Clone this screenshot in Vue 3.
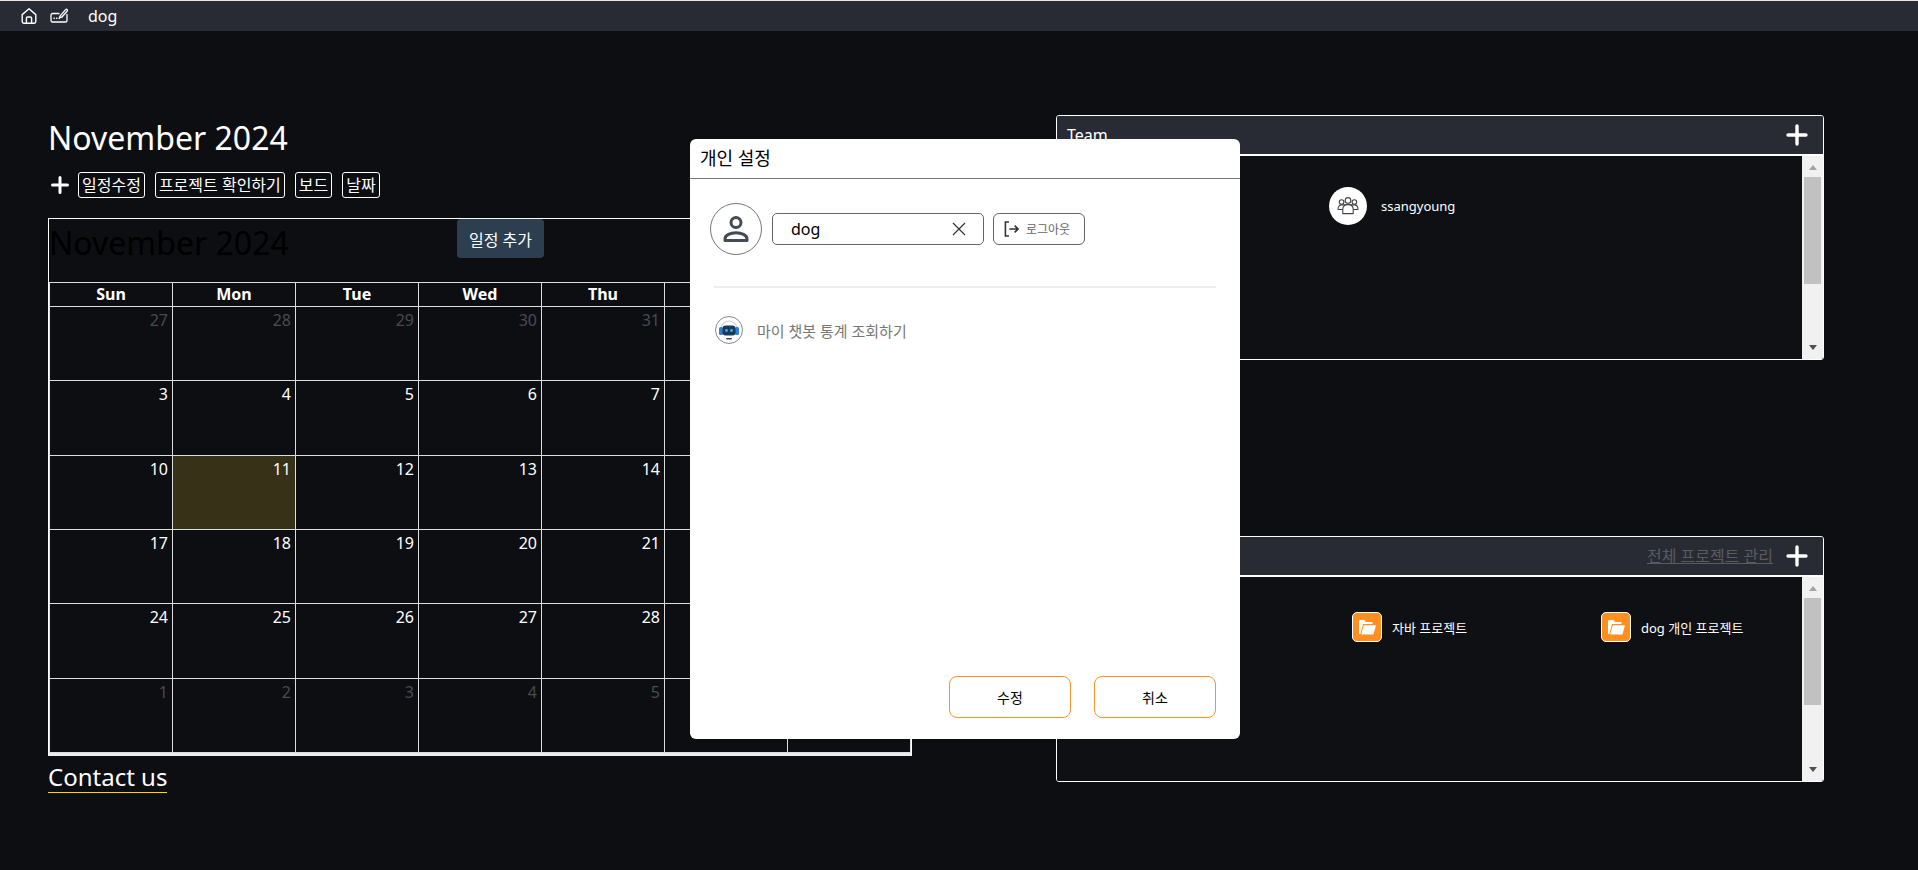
<template>
  <div class="page">
    <!-- top bar -->
    <nav class="topbar">
      <svg class="nav-icon" width="18" height="18" viewBox="0 0 18 18" fill="none" stroke="#fff" stroke-width="1.4" stroke-linejoin="round">
        <path d="M2.2 7.6 9 1.8l6.8 5.8v7a1.6 1.6 0 0 1-1.6 1.6H3.8a1.6 1.6 0 0 1-1.6-1.6z" />
        <path d="M6.4 16.2v-5a1.2 1.2 0 0 1 1.2-1.2h2.8a1.2 1.2 0 0 1 1.2 1.2v5" />
      </svg>
      <svg class="nav-icon tray" width="19" height="18" viewBox="0 0 19 18" fill="none" stroke="#fff" stroke-width="1.3" stroke-linecap="round" stroke-linejoin="round">
        <path d="M9 6.5H2.6A1.6 1.6 0 0 0 1 8.1v5.3C1 14.3 1.7 15 2.6 15h12.8c.9 0 1.6-.7 1.6-1.6V7.5" />
        <path d="M10 9.2 15.6 2.6c.4-.5 1-.5 1.5-.1s.5 1 .1 1.5L12 10l-2.4.6z" />
        <path d="M4 11.2h.2M6.6 11.2h.2M9.2 11.2h.2" stroke-width="1.6" />
      </svg>
      <span class="nav-name">dog</span>
    </nav>

    <main class="content">
      <!-- calendar column -->
      <section class="left">
        <h1 class="month">November 2024</h1>

        <div class="tools">
          <svg class="plus small" width="18" height="18" viewBox="0 0 18 18"><path d="M9 1.5v15M1.5 9h15" stroke="#fff" stroke-width="3" stroke-linecap="round" /></svg>
          <button v-for="t in tools" :key="t" class="tool">{{ t }}</button>
        </div>

        <div class="calendar">
          <div class="cal-toolbar">
            <h2 class="cal-title">November 2024</h2>
            <button class="cal-add">일정 추가</button>
          </div>
          <div class="cal-grid">
            <div v-for="d in weekdays" :key="d" class="cal-head">{{ d }}</div>
            <div
              v-for="c in cells"
              :key="c.id"
              class="cal-cell"
              :class="{ other: c.other, today: c.today }"
            >{{ c.day }}</div>
          </div>
        </div>

        <a class="contact">Contact us</a>
      </section>

      <!-- team / project column -->
      <section class="right">
        <div class="panel">
          <div class="panel-head">
            <span class="panel-title">Team</span>
            <svg class="plus" width="22" height="22" viewBox="0 0 22 22"><path d="M11 2v18M2 11h18" stroke="#fff" stroke-width="3.4" stroke-linecap="round" /></svg>
          </div>
          <div class="panel-body">
            <div class="panel-list team-list">
              <div class="team">
                <span class="team-avatar">
                  <svg width="24" height="20" viewBox="0 0 24 20" fill="#fff" stroke="#444" stroke-width="1.1" stroke-linejoin="round">
                    <circle cx="5.6" cy="6" r="2.3" />
                    <circle cx="18.4" cy="6" r="2.3" />
                    <path d="M2 13.5c0-3 1.4-4.6 3.6-4.6h12.8c2.2 0 3.6 1.6 3.6 4.6z" />
                    <circle cx="12" cy="4.4" r="2.8" />
                    <path d="M6.8 17.6v-4.4c0-3 2-4.6 5.2-4.6s5.2 1.6 5.2 4.6v4.4z" />
                  </svg>
                </span>
                <span class="team-name">ssangyoung</span>
              </div>
            </div>
            <div class="scrollbar">
              <i class="arrow up"></i>
              <div class="thumb"></div>
              <i class="arrow down"></i>
            </div>
          </div>
        </div>

        <div class="panel second">
          <div class="panel-head">
            <span class="panel-title">Project</span>
            <a class="manage">전체 프로젝트 관리</a>
            <svg class="plus" width="22" height="22" viewBox="0 0 22 22"><path d="M11 2v18M2 11h18" stroke="#fff" stroke-width="3.4" stroke-linecap="round" /></svg>
          </div>
          <div class="panel-body">
            <div class="panel-list project-list">
              <div v-for="p in projects" :key="p" class="project">
                <span class="folder">
                  <svg width="20" height="18" viewBox="0 0 20 18" fill="#fff">
                    <path d="M2 16V3.4C2 2.6 2.6 2 3.4 2h4l1.6 2h5.4c.7 0 1.2.5 1.2 1.2V6H6L3.4 16z" />
                    <path d="M6.8 7.2H19L16.4 16.6H4.2z" />
                  </svg>
                </span>
                <span class="project-name">{{ p }}</span>
              </div>
            </div>
            <div class="scrollbar">
              <i class="arrow up"></i>
              <div class="thumb"></div>
              <i class="arrow down"></i>
            </div>
          </div>
        </div>
      </section>
    </main>

    <!-- personal settings modal -->
    <div class="modal">
      <div class="modal-head">개인 설정</div>
      <div class="modal-body">
        <div class="profile">
          <span class="avatar">
            <svg width="32" height="32" viewBox="0 0 32 32" fill="none" stroke="#444b54" stroke-width="3">
              <circle cx="16" cy="9.5" r="5" />
              <path d="M5 27.5v-1.6c0-3.7 5.6-6.2 11-6.2s11 2.5 11 6.2v1.6z" stroke-linejoin="round" />
            </svg>
          </span>
          <div class="name-box">
            <span class="name-text">dog</span>
            <svg width="16" height="16" viewBox="0 0 16 16"><path d="M2 2l12 12M14 2 2 14" stroke="#333" stroke-width="1.2" /></svg>
          </div>
          <button class="logout">
            <svg width="17" height="18" viewBox="0 0 17 18" fill="none" stroke="#333" stroke-width="1.6">
              <path d="M6 2H2.4v14H6" />
              <path d="M6.4 9H15M11.6 5.6 15 9l-3.4 3.4" />
            </svg>
            <span>로그아웃</span>
          </button>
        </div>

        <div class="divider"></div>

        <div class="chatbot">
          <span class="bot-icon">
            <svg width="22" height="24" viewBox="0 0 22 24">
              <path d="M3 11a8 8 0 0 1 16 0" fill="none" stroke="#c9ced6" stroke-width="1.2" />
              <rect x="1" y="9" width="4" height="8" rx="1.5" fill="#2f7fd8" />
              <rect x="17" y="9" width="4" height="8" rx="1.5" fill="#2f7fd8" />
              <rect x="4.5" y="7.5" width="13" height="10" rx="3" fill="#1c3a57" />
              <circle cx="8.5" cy="12.5" r="1.4" fill="#39b6e8" />
              <circle cx="13.5" cy="12.5" r="1.4" fill="#39b6e8" />
              <rect x="8" y="20" width="6" height="1.6" rx=".8" fill="#444" />
            </svg>
          </span>
          <span class="bot-text">마이 챗봇 통계 조회하기</span>
        </div>

        <div class="modal-foot">
          <button class="action">수정</button>
          <button class="action">취소</button>
        </div>
      </div>
    </div>
  </div>
</template>

<script setup>
const tools = ['일정수정', '프로젝트 확인하기', '보드', '날짜']
const weekdays = ['Sun', 'Mon', 'Tue', 'Wed', 'Thu', 'Fri', 'Sat']
const projects = ['파이썬 프로젝트', '자바 프로젝트', 'dog 개인 프로젝트']

// 27 Oct -> 7 Dec, six weeks
const cells = []
for (let i = 0; i < 42; i++) {
  let day = i - 4
  let other = false
  if (i < 5) {
    day = 27 + i
    other = true
  } else if (day > 30) {
    day -= 30
    other = true
  }
  cells.push({ id: i, day, other, today: !other && day === 11 })
}
</script>

<style>
html,
body {
  margin: 0;
  background: #0c0e12;
}
</style>

<style scoped>
.page {
  position: relative;
  width: 1918px;
  height: 870px;
  overflow: hidden;
  background: #0c0e12;
  color: #fff;
  font-family: "Noto Sans", "Noto Sans CJK KR", sans-serif;
  font-size: 16px;
}

button {
  font-family: inherit;
  cursor: pointer;
}

.topbar {
  display: flex;
  align-items: center;
  height: 30px;
  padding-left: 20px;
  background: #282b33;
  border-top: 1px solid #f3e3dc;
}

.nav-icon {
  flex: none;
}

.tray {
  margin-left: 12px;
}

.nav-name {
  margin-left: 19px;
  line-height: 22px;
}

.content {
  display: grid;
  grid-template-columns: 864px 768px;
  column-gap: 144px;
  align-items: start;
  padding: 84px 0 0 48px;
}

.left {
  padding-top: 3px;
}

.month {
  margin: 0;
  font-size: 32px;
  font-weight: 400;
  line-height: 40px;
}

.tools {
  display: flex;
  align-items: center;
  margin-top: 14px;
  height: 26px;
}

.plus.small {
  margin: 0 9px 0 3px;
}

.tool {
  height: 26px;
  margin-right: 10px;
  padding: 0 3px;
  border: 1px solid #fff;
  border-radius: 3px;
  background: transparent;
  color: #fff;
  font-size: 16px;
  line-height: 22px;
  white-space: nowrap;
}

.calendar {
  margin-top: 20px;
  border: 1px solid #fff;
  border-bottom: 3px solid #eee;
}

.cal-toolbar {
  display: grid;
  grid-template-columns: 408px auto;
  align-items: start;
  height: 63px;
}

.cal-title {
  margin: 0;
  padding-top: 4px;
  font-size: 32px;
  font-weight: 400;
  line-height: 40px;
  color: #000;
  white-space: nowrap;
}

.cal-add {
  justify-self: start;
  width: 87px;
  height: 39px;
  border: 0;
  border-radius: 4px;
  background: #2c3e50;
  color: #fff;
  font-size: 16px;
  padding: 0;
}

.cal-grid {
  display: grid;
  grid-template-columns: repeat(7, 123px);
  grid-template-rows: 24px repeat(6, 74.33px);
  border-top: 1px solid #ddd;
  border-left: 1px solid #ddd;
}

.cal-head {
  border-right: 1px solid #ddd;
  border-bottom: 1px solid #ddd;
  text-align: center;
  font-weight: 700;
  line-height: 23px;
}

.cal-cell {
  padding: 2px 4px 0 0;
  border-right: 1px solid #ddd;
  border-bottom: 1px solid #ddd;
  text-align: right;
  line-height: 22px;
}

.cal-cell.other {
  color: #4a4b4e;
}

.cal-cell.today {
  background: #373117;
}

.contact {
  display: inline-block;
  margin-top: 6px;
  border-bottom: 1px solid #ffd400;
  font-size: 24px;
  line-height: 30px;
}

.panel {
  display: flex;
  flex-direction: column;
  height: 243px;
  border: 1px solid #fff;
  border-radius: 3px;
  overflow: hidden;
}

.panel.second {
  height: 244px;
  margin-top: 176px;
}

.panel-head {
  display: flex;
  align-items: center;
  flex: none;
  height: 38px;
  padding: 0 15px 0 10px;
  background: #282b33;
  border-bottom: 2px solid #fff;
}

.panel-title {
  flex: 1;
  line-height: 22px;
}

.manage {
  margin-right: 13px;
  color: #5a5b5e;
  text-decoration: underline;
  line-height: 22px;
}

.panel-body {
  display: flex;
  flex: 1;
  min-height: 0;
}

.panel-list {
  flex: 1;
  display: grid;
  grid-template-columns: 272px 249px 1fr;
  align-content: start;
  font-size: 13px;
  background: #0e1014;
}

.team-list {
  padding-top: 31px;
  grid-template-columns: 272px 1fr;
}

.team {
  grid-column: 2;
  display: flex;
  align-items: center;
  gap: 14px;
}

.team-avatar {
  display: flex;
  align-items: center;
  justify-content: center;
  width: 38px;
  height: 38px;
  border-radius: 50%;
  background: #fff;
}

.project-list {
  padding: 35px 0 0 23px;
}

.project {
  display: flex;
  align-items: center;
  gap: 10px;
  white-space: nowrap;
}

.folder {
  display: flex;
  align-items: center;
  justify-content: center;
  width: 28px;
  height: 28px;
  border: 1px solid #fff;
  border-radius: 5px;
  background: #ff8f1f;
}

.scrollbar {
  display: flex;
  flex-direction: column;
  align-items: center;
  flex: none;
  width: 21px;
  background: #f1f1f1;
}

.arrow {
  width: 0;
  height: 0;
  border-left: 4px solid transparent;
  border-right: 4px solid transparent;
}

.arrow.up {
  margin-top: 9px;
  border-bottom: 5px solid #a3a3a3;
}

.arrow.down {
  margin-top: auto;
  margin-bottom: 9px;
  border-top: 5px solid #505050;
}

.thumb {
  width: 17px;
  height: 107px;
  margin-top: 7px;
  background: #c1c1c1;
}

.modal {
  position: absolute;
  left: 690px;
  top: 139px;
  display: flex;
  flex-direction: column;
  width: 550px;
  height: 600px;
  border-radius: 6px;
  background: #fff;
  color: #000;
}

.modal-head {
  flex: none;
  height: 39px;
  padding-left: 10px;
  border-bottom: 1px solid #777;
  font-size: 18px;
  line-height: 38px;
}

.modal-body {
  display: flex;
  flex-direction: column;
  flex: 1;
  padding: 24px 24px 21px 20px;
}

.profile {
  display: flex;
  align-items: center;
}

.avatar {
  display: flex;
  align-items: center;
  justify-content: center;
  flex: none;
  width: 50px;
  height: 50px;
  border: 1px solid #777;
  border-radius: 50%;
}

.name-box {
  display: flex;
  align-items: center;
  justify-content: space-between;
  box-sizing: border-box;
  width: 212px;
  height: 32px;
  margin-left: 10px;
  padding: 0 16px 0 18px;
  border: 1px solid #666;
  border-radius: 5px;
}

.logout {
  display: flex;
  align-items: center;
  gap: 6px;
  box-sizing: border-box;
  width: 92px;
  height: 32px;
  margin-left: 9px;
  padding: 0 0 0 9px;
  border: 1px solid #666;
  border-radius: 6px;
  background: #fff;
  color: #666;
  font-size: 12px;
}

.divider {
  height: 2px;
  margin: 31px 0 0 4px;
  background: #eee;
}

.chatbot {
  display: flex;
  align-items: center;
  gap: 14px;
  margin: 28px 0 0 5px;
}

.bot-icon {
  display: flex;
  align-items: center;
  justify-content: center;
  box-sizing: border-box;
  width: 28px;
  height: 28px;
  border: 1px solid #888;
  border-radius: 50%;
}

.bot-text {
  color: #777;
  font-size: 15px;
}

.modal-foot {
  display: flex;
  justify-content: flex-end;
  gap: 23px;
  margin-top: auto;
}

.action {
  width: 122px;
  height: 42px;
  border: 1px solid #ff8f27;
  border-radius: 8px;
  background: #fff;
  color: #000;
  font-size: 14px;
}
</style>
